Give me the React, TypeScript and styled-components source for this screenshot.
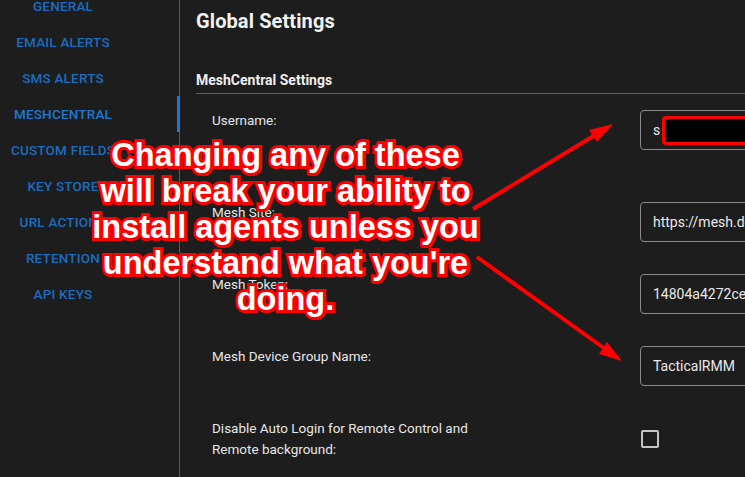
import React from "react";
import styled, { createGlobalStyle } from "styled-components";

const Global = createGlobalStyle`
  html, body { margin: 0; padding: 0; background: #1d1d1d; overflow: hidden; }
  * { box-sizing: border-box; }
`;

const Page = styled.div`
  position: relative;
  width: 745px;
  height: 477px;
  overflow: hidden;
  display: flex;
  background: #1d1d1d;
  font-family: Roboto, "Liberation Sans", Arial, sans-serif;
  color: #e6e6e6;
`;

const Sidebar = styled.nav`
  flex: 0 0 180px;
  border-right: 1px solid #5a5a5a;
  display: flex;
  flex-direction: column;
  margin-top: -12px;
`;

const Tab = styled.div<{ $active?: boolean }>`
  height: 36px;
  display: flex;
  align-items: center;
  justify-content: center;
  padding-right: 51px;
  font-size: 13.5px;
  font-weight: 500;
  text-transform: uppercase;
  letter-spacing: 0.2px;
  color: ${(p) => (p.$active ? "#1f78d1" : "#1c6cbf")};
  white-space: nowrap;
  border-right: 3px solid ${(p) => (p.$active ? "#1f78d1" : "transparent")};
  margin-right: -1px;
`;

const Main = styled.main`
  flex: 1;
  display: flex;
  flex-direction: column;
  padding: 5px 0 0 16px;
  min-width: 0;
`;

const Title = styled.div`
  font-size: 20px;
  font-weight: 700;
  line-height: 32px;
  color: #f2f2f2;
  letter-spacing: 0.1px;
`;

const Section = styled.div`
  margin-top: 33px;
  font-size: 14px;
  font-weight: 700;
  line-height: 20px;
  color: #eeeeee;
  padding-bottom: 3px;
  border-bottom: 1px solid #5e5e5e;
`;

const Rows = styled.div`
  display: flex;
  flex-direction: column;
  gap: 16px;
  margin-top: 8px;
`;

const Row = styled.div<{ $hint?: boolean; $center?: boolean }>`
  display: grid;
  grid-template-columns: 428px 240px;
  align-items: ${(p) => (p.$center ? "center" : "start")};
  padding: 8px 0 ${(p) => (p.$hint ? "28px" : "8px")} 16px;
  min-height: 56px;
`;

const Label = styled.div`
  max-width: 270px;
  font-size: 13.5px;
  line-height: 21px;
  color: #e6e6e6;
`;

const Field = styled.div`
  height: 40px;
  border: 1px solid #8a8a8a;
  border-radius: 4px;
  display: flex;
  align-items: center;
  padding-left: 12px;
  font-size: 14px;
  color: #e8e8e8;
  white-space: nowrap;
  overflow: hidden;
`;

const Redact = styled.span`
  display: inline-block;
  width: 120px;
  height: 29px;
  margin-left: 2px;
  background: #000;
  border: 3px solid #ff0000;
  border-radius: 4px;
`;

const Check = styled.div`
  width: 18px;
  height: 18px;
  margin-left: 1px;
  border: 2px solid #c4c4c4;
  border-radius: 2px;
`;

const Callout = styled.div`
  position: absolute;
  left: 85px;
  top: 137px;
  width: 401px;
  text-align: center;
  white-space: nowrap;
  font-family: "Liberation Sans", Arial, sans-serif;
  font-weight: 700;
  font-size: 32.5px;
  line-height: 36px;
  color: #ffffff;
  -webkit-text-stroke: 6px #ff0000;
  paint-order: stroke fill;
  pointer-events: none;
`;

const Arrows = styled.svg`
  position: absolute;
  left: 0;
  top: 0;
  pointer-events: none;
`;

const tabs = [
  "General",
  "Email Alerts",
  "SMS Alerts",
  "MeshCentral",
  "Custom Fields",
  "Key Store",
  "URL Actions",
  "Retention",
  "API Keys",
];

export default function App() {
  return (
    <>
      <Global />
      <Page>
        <Sidebar>
          {tabs.map((t) => (
            <Tab key={t} $active={t === "MeshCentral"}>
              {t}
            </Tab>
          ))}
        </Sidebar>
        <Main>
          <Title>Global Settings</Title>
          <Section>MeshCentral Settings</Section>
          <Rows>
            <Row $hint>
              <Label>Username:</Label>
              <Field>
                s<Redact />
              </Field>
            </Row>
            <Row>
              <Label>Mesh Site:</Label>
              <Field>https://mesh.domain.com</Field>
            </Row>
            <Row>
              <Label>Mesh Token:</Label>
              <Field>14804a4272ce9f1e2b7a63c0d5</Field>
            </Row>
            <Row>
              <Label>Mesh Device Group Name:</Label>
              <Field>TacticalRMM</Field>
            </Row>
            <Row $center>
              <Label>Disable Auto Login for Remote Control and Remote background:</Label>
              <Check />
            </Row>
          </Rows>
        </Main>
        <Callout>
          Changing any of these
          <br />
          will break your ability to
          <br />
          install agents unless you
          <br />
          understand what you're
          <br />
          doing.
        </Callout>
        <Arrows width="745" height="477" viewBox="0 0 745 477">
          <line x1="473" y1="209" x2="600" y2="132" stroke="#ff0000" strokeWidth="4" />
          <polygon points="613,124 589,130 597,142" fill="#ff0000" />
          <line x1="477" y1="257" x2="608" y2="351" stroke="#ff0000" strokeWidth="4" />
          <polygon points="622,361 599,354 607,342" fill="#ff0000" />
        </Arrows>
      </Page>
    </>
  );
}
